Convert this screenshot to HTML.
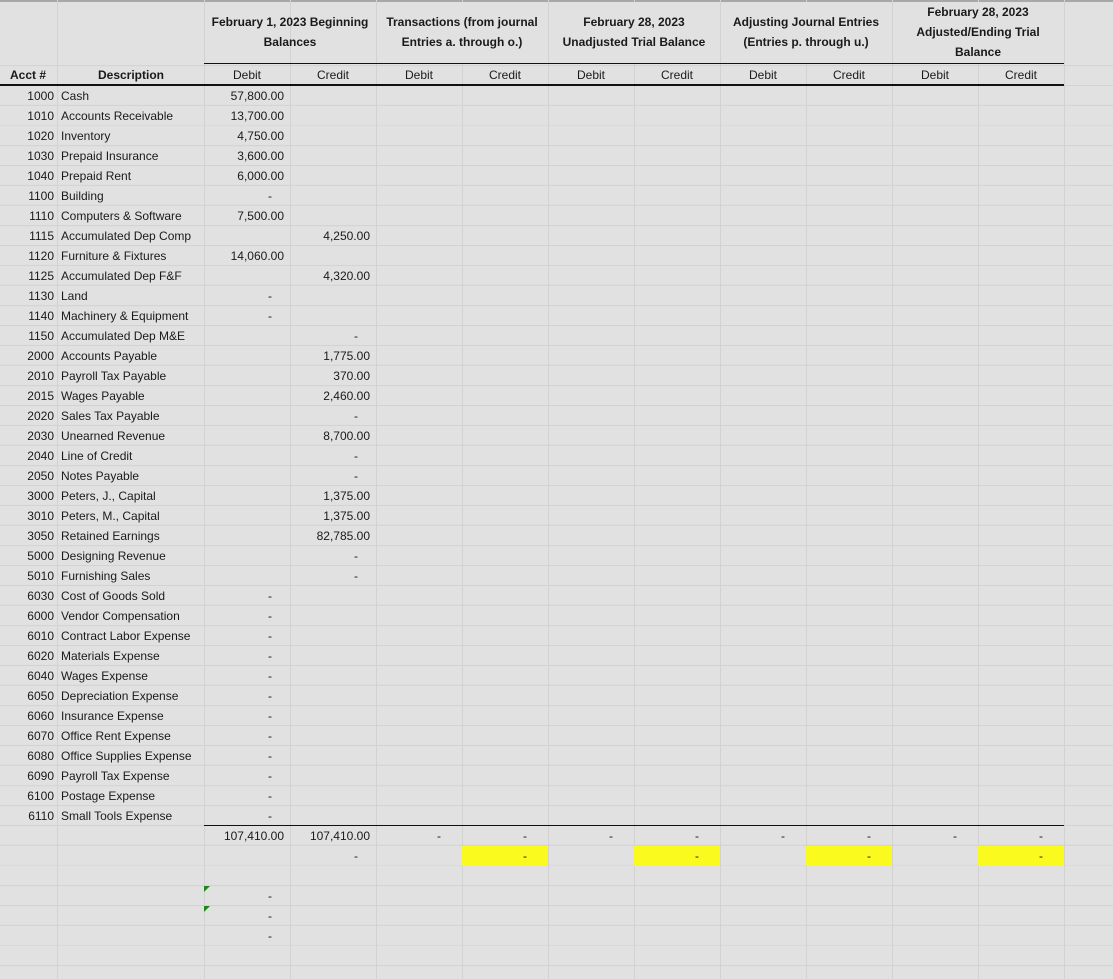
<!DOCTYPE html>
<html><head><meta charset="utf-8"><style>
*{margin:0;padding:0;box-sizing:border-box}
body{width:1113px;height:979px;overflow:hidden;background:#e1e1e1;position:relative;font-family:"Liberation Sans",Arial,sans-serif;font-size:12px;color:#1a1a1a}
#grid{position:absolute;left:0;top:0;width:1113px;height:979px;
background-image:
repeating-linear-gradient(to bottom,transparent 0,transparent 19px,#d2d2d2 19px,#d2d2d2 20px);
background-position:0 6px}
.v{position:absolute;top:0;width:1px;height:979px;background:#d2d2d2}
.hdrmask{position:absolute;top:0;height:64px;background:#e1e1e1}
.t{position:absolute;height:20px;line-height:20px;white-space:nowrap}
.hl{position:absolute;height:2px;background:#111}
.g{position:absolute;font-weight:bold;text-align:center;line-height:20px}
.y{position:absolute;height:20px;width:86px;background:#fafa1e}
</style></head><body>
<div id="grid"></div>
<div style="position:absolute;left:0;top:0;width:1113px;height:2px;background:#a8a8a8"></div>
<div class="v" style="left:57px"></div>
<div class="v" style="left:204px"></div><div class="v" style="left:290px"></div><div class="v" style="left:376px"></div><div class="v" style="left:462px"></div><div class="v" style="left:548px"></div><div class="v" style="left:634px"></div><div class="v" style="left:720px"></div><div class="v" style="left:806px"></div><div class="v" style="left:892px"></div><div class="v" style="left:978px"></div><div class="v" style="left:1064px"></div>
<div class="hdrmask" style="left:205px;width:85px;top:2px;height:62px"></div>
<div class="hdrmask" style="left:291px;width:85px;top:2px;height:62px"></div>
<div class="hdrmask" style="left:377px;width:171px;top:2px;height:62px"></div>
<div class="hdrmask" style="left:549px;width:171px;top:2px;height:62px"></div>
<div class="hdrmask" style="left:721px;width:171px;top:2px;height:62px"></div>
<div class="hdrmask" style="left:893px;width:171px;top:2px;height:62px"></div>
<div class="hdrmask" style="left:0;width:57px;top:2px;height:62px"></div>
<div class="hdrmask" style="left:58px;width:146px;top:2px;height:62px"></div>
<div class="hdrmask" style="left:1065px;width:48px;top:2px;height:62px"></div>

<div class="g" style="left:204px;width:172px;top:12px">February 1, 2023 Beginning<br>Balances</div>
<div class="g" style="left:376px;width:172px;top:12px">Transactions (from journal<br>Entries a. through o.)</div>
<div class="g" style="left:548px;width:172px;top:12px">February 28, 2023<br>Unadjusted Trial Balance</div>
<div class="g" style="left:720px;width:172px;top:12px">Adjusting Journal Entries<br>(Entries p. through u.)</div>
<div class="g" style="left:892px;width:172px;top:2px">February 28, 2023<br>Adjusted/Ending Trial<br>Balance</div>

<div class="hl" style="left:204px;width:860px;top:63px;height:1px;background:#111"></div>
<div class="hl" style="left:0;width:1064px;top:84px"></div>
<div class="hl" style="left:204px;width:860px;top:825px;height:1px"></div>

<div class="t" style="top:65px;left:10px;font-weight:bold">Acct #</div>
<div class="t" style="top:65px;left:58px;width:146px;text-align:center;font-weight:bold">Description</div>
<div class="t" style="top:65px;left:204px;width:86px;text-align:center">Debit</div><div class="t" style="top:65px;left:290px;width:86px;text-align:center">Credit</div>
<div class="t" style="top:65px;left:376px;width:86px;text-align:center">Debit</div><div class="t" style="top:65px;left:462px;width:86px;text-align:center">Credit</div>
<div class="t" style="top:65px;left:548px;width:86px;text-align:center">Debit</div><div class="t" style="top:65px;left:634px;width:86px;text-align:center">Credit</div>
<div class="t" style="top:65px;left:720px;width:86px;text-align:center">Debit</div><div class="t" style="top:65px;left:806px;width:86px;text-align:center">Credit</div>
<div class="t" style="top:65px;left:892px;width:86px;text-align:center">Debit</div><div class="t" style="top:65px;left:978px;width:86px;text-align:center">Credit</div>

<div style="position:absolute;left:0;top:86px;width:54px;text-align:right;line-height:20px">1000<br>1010<br>1020<br>1030<br>1040<br>1100<br>1110<br>1115<br>1120<br>1125<br>1130<br>1140<br>1150<br>2000<br>2010<br>2015<br>2020<br>2030<br>2040<br>2050<br>3000<br>3010<br>3050<br>5000<br>5010<br>6030<br>6000<br>6010<br>6020<br>6040<br>6050<br>6060<br>6070<br>6080<br>6090<br>6100<br>6110</div>
<div style="position:absolute;left:61px;top:86px;line-height:20px;white-space:nowrap">Cash<br>Accounts Receivable<br>Inventory<br>Prepaid Insurance<br>Prepaid Rent<br>Building<br>Computers &amp; Software<br>Accumulated Dep Comp<br>Furniture &amp; Fixtures<br>Accumulated Dep F&amp;F<br>Land<br>Machinery &amp; Equipment<br>Accumulated Dep M&amp;E<br>Accounts Payable<br>Payroll Tax Payable<br>Wages Payable<br>Sales Tax Payable<br>Unearned Revenue<br>Line of Credit<br>Notes Payable<br>Peters, J., Capital<br>Peters, M., Capital<br>Retained Earnings<br>Designing Revenue<br>Furnishing Sales<br>Cost of Goods Sold<br>Vendor Compensation<br>Contract Labor Expense<br>Materials Expense<br>Wages Expense<br>Depreciation Expense<br>Insurance Expense<br>Office Rent Expense<br>Office Supplies Expense<br>Payroll Tax Expense<br>Postage Expense<br>Small Tools Expense</div>
<div style="position:absolute;left:204px;top:86px;width:80px;text-align:right;line-height:20px">57,800.00<br>13,700.00<br>4,750.00<br>3,600.00<br>6,000.00<br><span style="margin-right:12px">-</span><br>7,500.00<br><br>14,060.00<br><br><span style="margin-right:12px">-</span><br><span style="margin-right:12px">-</span><br><br><br><br><br><br><br><br><br><br><br><br><br><br><span style="margin-right:12px">-</span><br><span style="margin-right:12px">-</span><br><span style="margin-right:12px">-</span><br><span style="margin-right:12px">-</span><br><span style="margin-right:12px">-</span><br><span style="margin-right:12px">-</span><br><span style="margin-right:12px">-</span><br><span style="margin-right:12px">-</span><br><span style="margin-right:12px">-</span><br><span style="margin-right:12px">-</span><br><span style="margin-right:12px">-</span><br><span style="margin-right:12px">-</span><br>107,410.00<br><br><br><span style="margin-right:12px">-</span><br><span style="margin-right:12px">-</span><br><span style="margin-right:12px">-</span></div>
<div style="position:absolute;left:290px;top:86px;width:80px;text-align:right;line-height:20px"><br><br><br><br><br><br><br>4,250.00<br><br>4,320.00<br><br><br><span style="margin-right:12px">-</span><br>1,775.00<br>370.00<br>2,460.00<br><span style="margin-right:12px">-</span><br>8,700.00<br><span style="margin-right:12px">-</span><br><span style="margin-right:12px">-</span><br>1,375.00<br>1,375.00<br>82,785.00<br><span style="margin-right:12px">-</span><br><span style="margin-right:12px">-</span><br><br><br><br><br><br><br><br><br><br><br><br><br>107,410.00<br><span style="margin-right:12px">-</span></div>

<div class="y" style="left:462px;top:846px"></div><div class="y" style="left:634px;top:846px"></div><div class="y" style="left:806px;top:846px"></div><div class="y" style="left:978px;top:846px"></div>
<div class="t" style="top:826px;left:437px">-</div><div class="t" style="top:826px;left:523px">-</div><div class="t" style="top:826px;left:609px">-</div><div class="t" style="top:826px;left:695px">-</div><div class="t" style="top:826px;left:781px">-</div><div class="t" style="top:826px;left:867px">-</div><div class="t" style="top:826px;left:953px">-</div><div class="t" style="top:826px;left:1039px">-</div>
<div class="t" style="top:846px;left:523px">-</div><div class="t" style="top:846px;left:695px">-</div><div class="t" style="top:846px;left:867px">-</div><div class="t" style="top:846px;left:1039px">-</div>
<svg style="position:absolute;left:204px;top:886px" width="6" height="26"><polygon points="0,0 6,0 0,6" fill="#1a8a1a"/><polygon points="0,20 6,20 0,26" fill="#1a8a1a"/></svg>
</body></html>
